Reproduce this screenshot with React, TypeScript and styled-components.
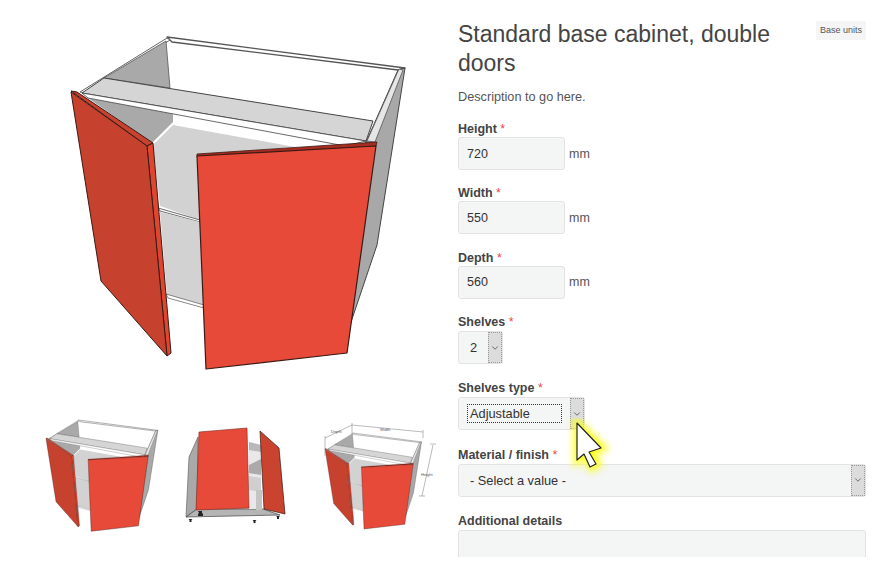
import React from 'react';
import styled, { createGlobalStyle } from 'styled-components';
import { ChevronDown } from 'lucide-react';

const GlobalStyle = createGlobalStyle`
    html, body {
        margin: 0;
        background: #fff;
    }
    body {
        font-family: "Liberation Sans", Arial, sans-serif;
        color: #444;
    }
`;

const CabinetShape = () => (
    <g strokeLinejoin="round">
        {/* carcass */}
        <polygon points="167,37 405,68 398,70 172,42" fill="#fff" stroke="#555" strokeWidth="1.4" />
        <polygon points="167,38 80,92 86,93 170,40" fill="#fff" stroke="#666" strokeWidth="1" />
        <polygon points="166,41 170,88 104,78" fill="#a9a9a9" stroke="#555" strokeWidth="0.8" />
        <polygon points="405,68 398,70 367,140 340,200 340,340 350,325 377,245" fill="#a8a8a8" stroke="#444" strokeWidth="1" />
        <polygon points="399,69 403,70 375,142 367,141" fill="#e6e6e6" stroke="#555" strokeWidth="0.8" />
        <polygon points="88,98 173,113 173,122 152,143" fill="#a9a9a9" />
        <polygon points="173,125 295,147 197,155 200,220 160,206 153,145" fill="#d2d2d2" />
        <polygon points="104,78 373,121 366,141 82,93" fill="#d5d5d5" stroke="#444" strokeWidth="1" />
        <polygon points="82,93 366,141 345,146 88,98" fill="#fff" stroke="#444" strokeWidth="0.8" />
        <polygon points="158,208 200,220 200,222 160,211" fill="#fff" stroke="#444" strokeWidth="0.8" />
        <polygon points="160,212 200,222 204,305 167,295" fill="#d2d2d2" />
        <polygon points="166,294 204,305 204,308 168,298" fill="#fff" stroke="#555" strokeWidth="0.7" />
        {/* left door */}
        <polygon points="71,91 77,92 153,143 147,146" fill="#c9412f" stroke="#3a1a14" strokeWidth="1" />
        <polygon points="147,146 153,143 171,353 167,356" fill="#e0452f" stroke="#3a1a14" strokeWidth="1" />
        <polygon points="71,92 147,146 167,356 101,281" fill="#c6422f" stroke="#3a1a14" strokeWidth="1" />
        {/* right door */}
        <polygon points="197,154 377,142 376,146 197,157" fill="#a82c20" stroke="#3a1a14" strokeWidth="0.8" />
        <polygon points="197,156 376,146 347,353 206,369" fill="#e84a39" stroke="#3a1a14" strokeWidth="1.2" />
    </g>
);

const FlippedCabinet = () => (
    <g transform="translate(-170,-410)" strokeLinejoin="round">
        <polygon points="198,437 189,457 186,517 197,509" fill="#a9a9a9" stroke="#555" strokeWidth="0.6" />
        <polygon points="186,517 280,515 263,509 197,509" fill="#b5b5b5" stroke="#444" strokeWidth="0.7" />
        <polygon points="249,442 261,445 261,509 249,509" fill="#e8e8e8" />
        <polygon points="249,442 261,445 261,452 249,450" fill="#b9b9b9" />
        <polygon points="249,465 261,459 261,475 249,473" fill="#aaa" />
        <polygon points="249,476 261,478 261,492 249,490" fill="#cfcfcf" />
        <polygon points="256,490 262,490 262,510 256,510" fill="#c4c4c4" />
        <polygon points="199,432 247,428 249,508 196,510" fill="#e84a39" stroke="#7a2a20" strokeWidth="0.6" />
        <polygon points="260,431 279,448 285,514 264,509" fill="#c9432f" stroke="#3a1a14" strokeWidth="0.7" />
        <path d="M188.5 519 h4 l-1 1 v2 h-2 v-2 z" fill="#222" />
        <path d="M198 511 h4 v2 l1 1 v2 h-5 v-2 l1 -1 z" fill="#222" />
        <path d="M252.5 520 h4 l-1 1 v2 h-2 v-2 z" fill="#222" />
        <path d="M276 516 h4 l-1 1 v2 h-2 v-2 z" fill="#222" />
    </g>
);

const Dimensions = () => (
    <g transform="translate(-310,-410)" stroke="#777" strokeWidth="0.5" fill="none">
        <path d="M325 438 L352 425 L423 432 M433 445 L422 496 M325 436 v20 M352 423 v12 M423 430 v8 M430 444 h6 M419 496 h6" />
        <DimLabel x="331" y="433">Depth</DimLabel>
        <DimLabel x="380" y="431">Width</DimLabel>
        <DimLabel x="421" y="476">Height</DimLabel>
    </g>
);

const Field = ({ label, required = true, tall, children }: { label: string; required?: boolean; tall?: boolean; children: React.ReactNode }) => (
    <FieldRow $tall={tall}>
        <Label $tall={tall}>
            {label}
            {required && <Star> *</Star>}
        </Label>
        {children}
    </FieldRow>
);

const NumberField = ({ label, value }: { label: string; value: string }) => (
    <Field label={label}>
        <InputRow>
            <TextInput value={value} readOnly />
            <Unit>mm</Unit>
        </InputRow>
    </Field>
);

const Select = ({ value, width, focused }: { value: string; width?: number; focused?: boolean }) => (
    <SelectBox $width={width}>
        <SelectValue $focused={focused}>{value}</SelectValue>
        <SelectArrow>
            <ChevronDown size={10} strokeWidth={1.8} color="#444" />
        </SelectArrow>
    </SelectBox>
);

export default function App() {
    return (
        <>
            <GlobalStyle />
            <Page>
                <Gallery>
                    <Hero viewBox="0 0 450 400">
                        <CabinetShape />
                    </Hero>
                    <Thumbs>
                        <Thumb viewBox="0 0 140 130">
                            <g transform="translate(-7.8,-2.4) scale(0.335)">
                                <CabinetShape />
                            </g>
                        </Thumb>
                        <Thumb viewBox="0 0 140 130">
                            <FlippedCabinet />
                        </Thumb>
                        <Thumb viewBox="0 0 140 130">
                            <g transform="translate(-5.5,12.3) scale(0.289)">
                                <CabinetShape />
                            </g>
                            <Dimensions />
                        </Thumb>
                    </Thumbs>
                </Gallery>

                <Details>
                    <Header>
                        <Title>Standard base cabinet, double doors</Title>
                        <Badge>Base units</Badge>
                    </Header>
                    <Description>Description to go here.</Description>
                    <NumberField label="Height" value="720" />
                    <NumberField label="Width" value="550" />
                    <NumberField label="Depth" value="560" />
                    <Field label="Shelves" tall>
                        <Select value="2" width={45} />
                    </Field>
                    <Field label="Shelves type" tall>
                        <Select value="Adjustable" width={127} focused />
                    </Field>
                    <Field label="Material / finish" tall>
                        <Select value="- Select a value -" />
                    </Field>
                    <Field label="Additional details" required={false} tall>
                        <TextArea />
                    </Field>
                </Details>

                <Pointer viewBox="0 0 50 64" width="50" height="64">
                    <defs>
                        <filter id="glow" x="-40%" y="-40%" width="180%" height="180%">
                            <feGaussianBlur stdDeviation="3.5" />
                        </filter>
                    </defs>
                    <polygon points="12,5 38,30 26,34 33,46 27,50 20,37 12,43" fill="#fbff1e" stroke="#fbff1e" strokeWidth="7" filter="url(#glow)" />
                    <polygon points="12,5 36,30 24,34 31,46 25,49 19,36 12,42" fill="#fff" stroke="#222" strokeWidth="1.2" strokeLinejoin="round" />
                </Pointer>
            </Page>
        </>
    );
}

const Page = styled.div`
    position: relative;
    display: flex;
    width: 891px;
    height: 578px;
    overflow: hidden;
    background: #fff;
`;

const Gallery = styled.div`
    flex: none;
    width: 458px;
    display: flex;
    flex-direction: column;
`;

const Hero = styled.svg`
    display: block;
    width: 450px;
    height: 400px;
    flex: none;
`;

const Thumbs = styled.div`
    display: flex;
    padding: 10px 0 0 30px;
`;

const Thumb = styled.svg`
    display: block;
    width: 140px;
    height: 130px;
    flex: none;
`;

const DimLabel = styled.text`
    font-family: "Liberation Sans", Arial, sans-serif;
    font-size: 4px;
    fill: #555;
    stroke: none;
`;

const Details = styled.div`
    flex: none;
    width: 408px;
    height: 557px;
    overflow: hidden;
    padding-top: 20px;
    box-sizing: border-box;
`;

const Header = styled.div`
    display: flex;
    justify-content: space-between;
    align-items: flex-start;
`;

const Title = styled.h1`
    width: 340px;
    margin: 0;
    font-size: 23px;
    font-weight: 400;
    line-height: 29px;
    color: #444;
`;

const Badge = styled.span`
    margin-top: 1px;
    padding: 4px 4px;
    background: #f5f5f5;
    font-size: 9px;
    line-height: 11px;
    color: #555;
`;

const Description = styled.p`
    margin: 11px 0 16px;
    font-size: 12.7px;
    line-height: 16px;
    color: #555;
`;

const FieldRow = styled.div<{ $tall?: boolean }>`
    display: flex;
    flex-direction: column;
    align-items: flex-start;
    margin-top: 12px;
    height: ${(p) => (p.$tall ? '54.2px' : '52.4px')};
`;

const Label = styled.label<{ $tall?: boolean }>`
    font-size: 12.5px;
    font-weight: 700;
    line-height: 16px;
    color: #444;
    margin-bottom: ${(p) => (p.$tall ? '1px' : '0')};
`;

const Star = styled.span`
    color: #e2494f;
    font-weight: 400;
`;

const InputRow = styled.div`
    display: flex;
    align-items: center;
    gap: 4px;
`;

const TextInput = styled.input`
    width: 107px;
    height: 33px;
    box-sizing: border-box;
    padding: 0 8px;
    border: 1px solid #e3e3e3;
    border-radius: 3px;
    background: #f4f5f5;
    font-family: inherit;
    font-size: 12.5px;
    color: #333;
    outline: none;
`;

const Unit = styled.span`
    font-size: 12.5px;
    color: #555;
`;

const SelectBox = styled.div<{ $width?: number }>`
    display: flex;
    align-items: stretch;
    justify-content: space-between;
    width: ${(p) => (p.$width ? `${p.$width}px` : '100%')};
    height: 33px;
    flex: none;
    box-sizing: border-box;
    padding-left: 8px;
    border: 1px solid #e3e3e3;
    border-radius: 3px;
    background: #f4f5f5;
`;

const SelectValue = styled.span<{ $focused?: boolean }>`
    align-self: center;
    flex: ${(p) => (p.$focused ? '1' : 'none')};
    margin-right: ${(p) => (p.$focused ? '8px' : '0')};
    padding: 1px 2px;
    border: 1px dotted ${(p) => (p.$focused ? '#333' : 'transparent')};
    font-size: 12.8px;
    line-height: 15px;
    color: #333;
`;

const SelectArrow = styled.span`
    flex: none;
    width: 14px;
    display: flex;
    align-items: center;
    justify-content: center;
    box-sizing: border-box;
    border: 1px dotted #999;
    background: #dcdcdc;
`;

const TextArea = styled.div`
    width: 100%;
    height: 60px;
    flex: none;
    box-sizing: border-box;
    border: 1px solid #e3e3e3;
    border-radius: 3px;
    background: #f4f5f5;
`;

const Pointer = styled.svg`
    position: absolute;
    left: 565px;
    top: 418px;
`;
